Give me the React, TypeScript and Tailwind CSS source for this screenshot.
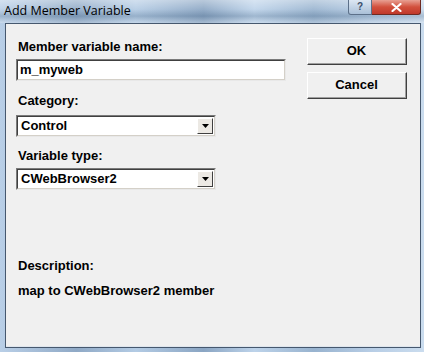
import React from "react";

const sans = { fontFamily: '"Liberation Sans", Arial, sans-serif' };

function Combo({ value }: { value: string }) {
  return (
    <div className="flex h-[22px] w-[200px] border-t border-l border-t-[#7a7a7a] border-l-[#7a7a7a] border-b border-r border-b-[#e8e8e8] border-r-[#e8e8e8]">
      <div className="flex flex-1 border-t border-l border-t-[#404040] border-l-[#404040] border-b border-r border-b-[#d4d0c8] border-r-[#d4d0c8] bg-white">
        <div className="flex-1 pl-[3px] text-[13px] font-bold leading-[18px] text-black">{value}</div>
        <div className="m-[1px] flex h-[16px] w-[16px] items-center justify-center border-t border-l border-t-white border-l-white border-b border-r border-b-[#404040] border-r-[#404040] bg-[#ece9e4]">
          <svg width="7" height="4" viewBox="0 0 7 4"><path d="M0 0H7L3.5 4Z" fill="#000" /></svg>
        </div>
      </div>
    </div>
  );
}

function Btn({ label }: { label: string }) {
  return (
    <div className="flex h-[27px] w-[100px] border-t border-l border-t-white border-l-white border-b border-r border-b-[#404040] border-r-[#404040]">
      <div className="flex flex-1 items-center justify-center border-b border-r border-b-[#a0a0a0] border-r-[#a0a0a0] bg-[#f0f0f0] text-[13px] font-bold text-black">
        {label}
      </div>
    </div>
  );
}

export default function App() {
  return (
    <div className="relative flex h-[352px] w-[424px] flex-col overflow-hidden bg-[linear-gradient(90deg,#b9cfe7_0%,#8fa9c6_18%,#b3cbe4_32%,#8aa5c3_48%,#bdd3ea_60%,#98b3cf_74%,#b8cee6_88%,#cadcee_100%)]" style={sans}>
      {/* title bar */}
      <div className="flex h-[23px] items-start bg-[linear-gradient(180deg,rgba(255,255,255,0.4)_0%,rgba(255,255,255,0.1)_40%,rgba(40,70,100,0.2)_70%,rgba(255,255,255,0.25)_100%)]">
        <div className="pl-[4px] pt-[3px] text-[12.5px] leading-[16px] text-black" style={{ fontFamily: '"Open Sans", "Noto Sans", sans-serif' }}>
          Add Member Variable
        </div>
        <div className="flex-1" />
        <div className="mr-[3px] flex">
          <div className="flex h-[15px] w-[24px] items-center justify-center rounded-bl-[3px] border border-t-0 border-[#5c7089] bg-[linear-gradient(180deg,#dce7f3,#aac0d8)] text-[10px] font-bold leading-none text-[#3a4e6a]">
            ?
          </div>
          <div className="flex h-[15px] w-[49px] items-center justify-center rounded-br-[3px] border border-t-0 border-l-0 border-[#6e2a22] bg-[linear-gradient(180deg,#e8a093_0%,#d2503c_50%,#c0392b_100%)]">
            <svg width="11" height="9" viewBox="0 0 11 9">
              <path d="M1.5 1L9.5 8M9.5 1L1.5 8" stroke="#fff" strokeWidth="2.2" strokeLinecap="round" />
            </svg>
          </div>
        </div>
      </div>
      {/* body */}
      <div className="flex flex-1 pl-[5px] pr-[3px] pb-[4px]">
        <div className="flex flex-1 border border-[#46586e] bg-[#f0f0f0]">
          <div className="flex flex-1 border-b border-b-[#dfe6ee]">
            <div className="ml-[10px] flex w-[270px] flex-col pt-[16px] text-[13px] font-bold leading-[14px] text-black">
              <div className="pl-[2px]">Member variable name:</div>
              <div className="mt-[5px] h-[22px] w-[270px] border-t border-l border-t-[#7a7a7a] border-l-[#7a7a7a] border-b border-r border-b-[#e8e8e8] border-r-[#e8e8e8]">
                <div className="h-full border-t border-l border-t-[#404040] border-l-[#404040] border-b border-r border-b-[#d4d0c8] border-r-[#d4d0c8] bg-white pl-[2px] leading-[18px]">
                  m_myweb
                </div>
              </div>
              <div className="mt-[13px] pl-[2px]">Category:</div>
              <div className="mt-[7px]"><Combo value="Control" /></div>
              <div className="mt-[12px] pl-[2px]">Variable type:</div>
              <div className="mt-[5px]"><Combo value="CWebBrowser2" /></div>
              <div className="mt-[69px] pl-[2px]">Description:</div>
              <div className="mt-[11px] pl-[2px]">map to CWebBrowser2 member</div>
            </div>
            <div className="ml-[21px] flex flex-col gap-[7px] pt-[14px]">
              <Btn label="OK" />
              <Btn label="Cancel" />
            </div>
          </div>
        </div>
      </div>
    </div>
  );
}
